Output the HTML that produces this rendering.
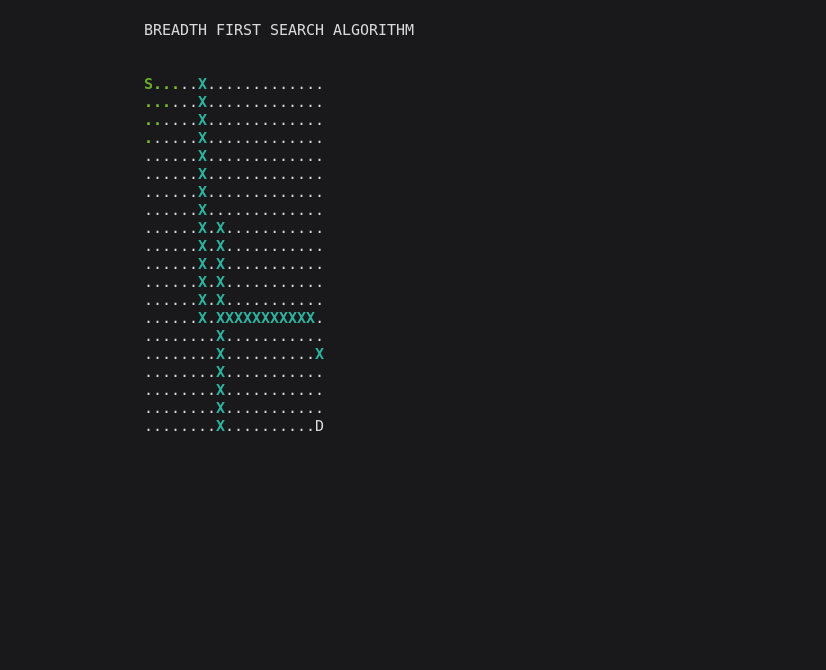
<!DOCTYPE html>
<html><head><meta charset="utf-8"><style>
html,body{margin:0;padding:0;background:#19181b;width:826px;height:670px;overflow:hidden}
pre{position:absolute;left:144px;margin:0;font-family:"DejaVu Sans Mono","Liberation Mono",monospace;font-size:15px;line-height:18px;color:#dadada;letter-spacing:-0.03px}
.t{top:21px}
.g{top:75px}
.x{color:#2bb5a0;font-weight:bold}
.s{color:#6aaa2a;font-weight:bold}
.d{color:#7cbf30;font-weight:bold}
</style></head><body>
<pre class="t">BREADTH FIRST SEARCH ALGORITHM</pre>
<pre class="g"><span class="s">S</span><span class="d">...</span>..<span class="x">X</span>.............
<span class="d">...</span>...<span class="x">X</span>.............
<span class="d">..</span>....<span class="x">X</span>.............
<span class="d">.</span>.....<span class="x">X</span>.............
......<span class="x">X</span>.............
......<span class="x">X</span>.............
......<span class="x">X</span>.............
......<span class="x">X</span>.............
......<span class="x">X</span>.<span class="x">X</span>...........
......<span class="x">X</span>.<span class="x">X</span>...........
......<span class="x">X</span>.<span class="x">X</span>...........
......<span class="x">X</span>.<span class="x">X</span>...........
......<span class="x">X</span>.<span class="x">X</span>...........
......<span class="x">X</span>.<span class="x">XXXXXXXXXXX</span>.
........<span class="x">X</span>...........
........<span class="x">X</span>..........<span class="x">X</span>
........<span class="x">X</span>...........
........<span class="x">X</span>...........
........<span class="x">X</span>...........
........<span class="x">X</span>..........D</pre>
</body></html>
